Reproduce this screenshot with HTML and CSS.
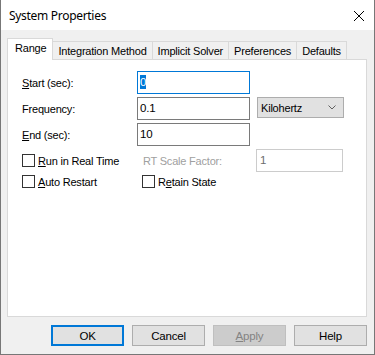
FILE: index.html
```html
<!doctype html>
<html lang="en">
  <head>
    <meta charset="UTF-8" />
    <title>System Properties</title>
    <link rel="stylesheet" href="styles.css">
  </head>
  <body>
    <div class="window">
      <div class="titlebar">
        <span class="title">System Properties</span>
        <svg class="close" width="12" height="12" viewBox="0 0 12 12">
          <path d="M1 1 L11 11 M11 1 L1 11" stroke="#000" stroke-width="1" fill="none" />
        </svg>
      </div>

      <div class="dialog">
        <div class="tabs">
          <div class="tab active">Range</div>
          <div class="tab">Integration Method</div>
          <div class="tab">Implicit Solver</div>
          <div class="tab">Preferences</div>
          <div class="tab">Defaults</div>
        </div>

        <div class="panel">
          <div class="fields">
            <label class="label"><u>S</u>tart (sec):</label>
            <div class="input focused"><span class="selected">0</span></div>
            <div></div>

            <label class="label">Frequency:</label>
            <div class="input">0.1</div>
            <div class="combo">
              <span>Kilohertz</span>
              <svg width="8" height="5" viewBox="0 0 8 5">
                <path d="M0.5 0.5 L4 4 L7.5 0.5" stroke="#606060" fill="none" />
              </svg>
            </div>

            <label class="label"><u>E</u>nd (sec):</label>
            <div class="input">10</div>
            <div></div>
          </div>

          <div class="options">
            <div class="check"><span class="box"></span><span><u>R</u>un in Real Time</span></div>
            <div class="label disabled">RT Scale Factor:</div>
            <div class="input readonly">1</div>

            <div class="check"><span class="box"></span><span><u>A</u>uto Restart</span></div>
            <div class="check"><span class="box"></span><span>R<u>e</u>tain State</span></div>
            <div></div>
          </div>
        </div>

        <div class="buttons">
          <button class="default">OK</button>
          <button>Cancel</button>
          <button class="disabled-btn"><u>A</u>pply</button>
          <button>Help</button>
        </div>
      </div>
    </div>
  </body>
</html>
```

FILE: styles.css
```css
body {
  margin: 0;
  font-family: "Liberation Sans", Arial, sans-serif;
  font-size: 11px;
  letter-spacing: -0.2px;
  color: #000;
}
.window {
  width: 375px;
  height: 355px;
  box-sizing: border-box;
  border: 1px solid #777;
  border-top: none;
  background: #f0f0f0;
  display: flex;
  flex-direction: column;
}
.titlebar {
  height: 30px;
  flex: none;
  background: #fff;
  display: flex;
  align-items: center;
  justify-content: space-between;
  padding: 0 8px 0 8px;
}
.title {
  font-family: "Noto Sans", sans-serif;
  font-size: 12px;
  letter-spacing: -0.3px;
}
.close {
  margin-right: 1px;
  margin-top: 1px;
}
.dialog {
  flex: 1;
  display: flex;
  flex-direction: column;
  padding: 8px 7px 8px 6px;
}
.tabs {
  height: 21px;
  display: flex;
  align-items: flex-end;
  position: relative;
  z-index: 1;
}
.tab {
  height: 18px;
  box-sizing: border-box;
  padding: 2px 5px 0;
  border: 1px solid #d9d9d9;
  border-bottom: none;
  border-left: none;
  line-height: 15px;
}
.tab.active {
  height: 22px;
  margin-bottom: -1px;
  padding: 2px 6px 0 7px;
  background: #fff;
  border-left: 1px solid #d9d9d9;
  line-height: 14px;
}
.panel {
  flex: 1;
  background: #fff;
  border: 1px solid #d9d9d9;
  padding: 11px 14px 0;
}
.fields {
  display: grid;
  grid-template-columns: 115px 113px 94px;
  grid-template-rows: 23px 23px 23px;
  row-gap: 3px;
  align-items: center;
}
.label u,
.check u,
button u {
  text-decoration-thickness: 1px;
  text-underline-offset: 1px;
}
.input {
  height: 23px;
  box-sizing: border-box;
  border: 1px solid #7a7a7a;
  padding: 0 2px;
  line-height: 21px;
  font-size: 11.5px;
}
.input.focused {
  border-color: #0078d7;
}
.selected {
  background: #0078d7;
  color: #fff;
  padding: 1px 0;
}
.combo {
  align-self: start;
  margin-left: 7px;
  height: 21px;
  box-sizing: border-box;
  background: #e1e1e1;
  border: 1px solid #adadad;
  display: flex;
  align-items: center;
  justify-content: space-between;
  padding: 0 7px 0 3px;
}
.options {
  margin-top: 3px;
  display: grid;
  grid-template-columns: 120px 114px 87px;
  grid-template-rows: 23px 19px;
  align-items: center;
}
.check {
  display: flex;
  align-items: center;
  gap: 3px;
}
.box {
  width: 13px;
  height: 13px;
  box-sizing: border-box;
  border: 1px solid #333;
  background: #fff;
}
.disabled {
  color: #a0a0a0;
  padding-left: 1px;
}
.input.readonly {
  border-color: #ccc;
  color: #6d6d6d;
  padding-left: 3px;
}
.buttons {
  margin-top: 8px;
  display: flex;
  justify-content: flex-end;
  gap: 8px;
}
button {
  width: 73px;
  height: 21px;
  box-sizing: border-box;
  background: #e1e1e1;
  border: 1px solid #adadad;
  border-radius: 0;
  font-family: "Liberation Sans", Arial, sans-serif;
  font-size: 11.5px;
  letter-spacing: -0.2px;
  color: #000;
  padding: 0;
}
button.default {
  border: 2px solid #0078d7;
}
button.disabled-btn {
  background: #ccc;
  border-color: #bfbfbf;
  color: #838383;
}
```
